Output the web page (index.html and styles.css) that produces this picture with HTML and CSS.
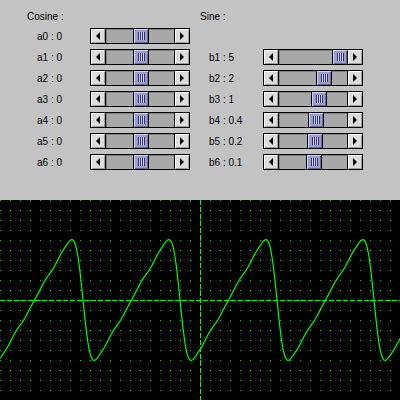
FILE: index.html
```
<!DOCTYPE html>
<html lang="en">
  <head>
    <meta charset="UTF-8" />
    <title>Fourier</title>
    <link rel="stylesheet" href="styles.css">
  </head>

  <body>
    <div class="panel">
      <div class="group" id="cosine">
        <div class="group-title">Cosine :</div>
      </div>
      <div class="group" id="sine">
        <div class="group-title">Sine :</div>
        <div class="row"></div>
      </div>
    </div>

    <svg class="scope" width="400" height="200" viewBox="0 0 400 200">
      <defs>
        <pattern id="dots" width="10" height="10" patternUnits="userSpaceOnUse">
          <rect width="1" height="1" fill="#00e000" />
        </pattern>
      </defs>
      <rect width="400" height="200" fill="url(#dots)" />
      <line class="axis" x1="0" y1="100.5" x2="400" y2="100.5" />
      <line class="axis" x1="200.5" y1="0" x2="200.5" y2="200" />
      <polyline id="wave" class="wave" points="" />
    </svg>

    <script>
      const cosineValues = [0, 0, 0, 0, 0, 0, 0];
      const sineValues = [0, 5, 2, 1, 0.4, 0.2, 0.1];

      const TRAVEL = 53;
      const PERIOD = 97;
      const OFFSET = 83;

      function makeRow(name, value) {
        const row = document.createElement("div");
        row.classList.add("row");

        const label = document.createElement("span");
        label.classList.add("label");
        label.innerText = `${name} : ${value}`;

        const pos = Math.round(((value + 5) / 10) * TRAVEL);
        const scroll = document.createElement("div");
        scroll.classList.add("scroll");
        scroll.innerHTML = `<div class="arrow left"></div>
          <div class="track"><div class="thumb" style="left: ${pos}px"></div></div>
          <div class="arrow right"></div>`;

        row.appendChild(label);
        row.appendChild(scroll);
        return row;
      }

      const cosineGroup = document.getElementById("cosine");
      cosineValues.forEach((v, i) => {
        cosineGroup.appendChild(makeRow("a" + i, v));
      });

      const sineGroup = document.getElementById("sine");
      sineValues.forEach((v, i) => {
        if (i > 0) sineGroup.appendChild(makeRow("b" + i, v));
      });

      function drawWave() {
        const points = [];
        for (let x = 0; x <= 400; x++) {
          const t = (2 * Math.PI * (x - OFFSET)) / PERIOD;
          let f = 0;
          for (let n = 0; n < 7; n++) {
            f += cosineValues[n] * Math.cos(n * t) + sineValues[n] * Math.sin(n * t);
          }
          points.push(x + "," + (100 + 10 * f).toFixed(1));
        }
        document.getElementById("wave").setAttribute("points", points.join(" "));
      }

      drawWave();
    </script>
  </body>
</html>
```

FILE: styles.css
```
* {
  box-sizing: border-box;
  margin: 0;
  padding: 0;
}

body {
  width: 400px;
  height: 400px;
  overflow: hidden;
  font-family: "Liberation Sans", Arial, sans-serif;
  font-size: 10px;
  color: #000;
  background-color: #000;
}

.panel {
  height: 200px;
  display: flex;
  background-color: #c3c3c3;
}

.group {
  width: 200px;
  display: flex;
  flex-direction: column;
  gap: 5px;
  padding-top: 11px;
}

.group-title {
  height: 12px;
  line-height: 12px;
}

#cosine .group-title {
  padding-left: 27px;
}

#cosine .row {
  padding-left: 37px;
}

#cosine .label {
  width: 53px;
}

#sine .row {
  padding-left: 9px;
}

#sine .label {
  width: 54px;
}

.row {
  height: 16px;
  display: flex;
  align-items: center;
}

.scroll {
  width: 100px;
  height: 16px;
  display: flex;
  border: 1px solid #000;
}

.arrow {
  width: 15px;
  display: flex;
  align-items: center;
  justify-content: center;
  background-color: #dcdcdc;
  box-shadow: inset 1px 1px #fff, inset -1px -1px #a0a0a0;
}

.arrow.left {
  border-right: 1px solid #000;
}

.arrow.right {
  border-left: 1px solid #000;
}

.arrow::before {
  content: "";
  border-top: 4px solid transparent;
  border-bottom: 4px solid transparent;
}

.arrow.left::before {
  border-right: 4px solid #000;
}

.arrow.right::before {
  border-left: 4px solid #000;
}

.track {
  flex: 1;
  position: relative;
  background-color: #a8a8a8;
  box-shadow: inset 1px 1px #808080;
}

.thumb {
  position: absolute;
  top: 0;
  width: 16px;
  height: 14px;
  display: flex;
  align-items: center;
  justify-content: center;
  background-color: #9c9cce;
  border-left: 1px solid #000;
  border-right: 1px solid #000;
  box-shadow: inset 1px 1px #d0d0ff, inset -1px -1px #6a6a9a;
}

.thumb::before {
  content: "";
  width: 7px;
  height: 8px;
  background: repeating-linear-gradient(to right, #333366 0 1px, #d0d0ff 1px 2px);
}

.scope {
  display: block;
  background-color: #000;
}

.axis {
  stroke: #00ff00;
  stroke-width: 1;
  stroke-dasharray: 5 2;
  shape-rendering: crispEdges;
}

.wave {
  fill: none;
  stroke: #00ff00;
  stroke-width: 1.2;
}
```
